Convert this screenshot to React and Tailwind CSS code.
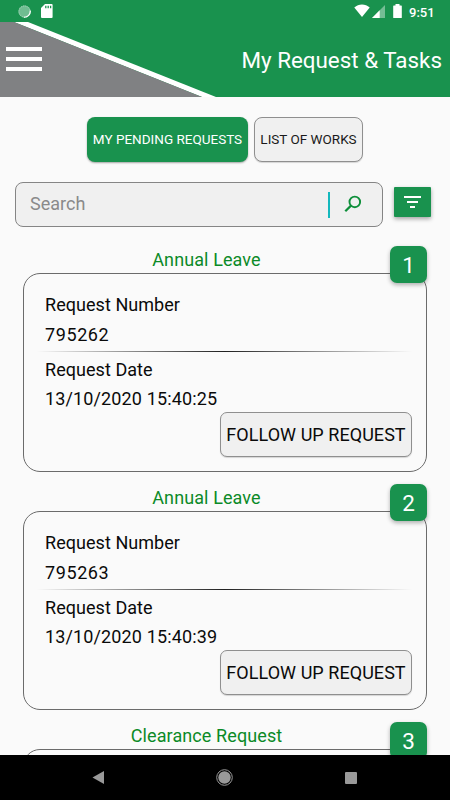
import React, { useState } from 'react'

const requests = [
  { id: 1, type: 'Annual Leave', number: '795262', date: '13/10/2020 15:40:25' },
  { id: 2, type: 'Annual Leave', number: '795263', date: '13/10/2020 15:40:39' },
  { id: 3, type: 'Clearance Request' },
]

function StatusBar() {
  return (
    <div className="h-[22px] shrink-0 bg-[#19924e] flex items-center justify-between text-white">
      <div className="flex items-center pl-[18px]">
        <svg width="13" height="13" viewBox="0 0 13 13">
          <circle cx="6.5" cy="6.5" r="6" fill="#6fbd91" />
          <circle cx="6.5" cy="6.5" r="5.6" fill="none" stroke="#b5dcc6" strokeDasharray="1 1" />
          <path d="M12.2 5.5a5.8 5.8 0 0 1-6.4 6.7" fill="none" stroke="#fff" strokeWidth="1.2" />
        </svg>
        <svg className="ml-[10px]" width="12" height="14" viewBox="0 0 12 14">
          <path d="M4 0h6.6a1 1 0 0 1 1 1v12a1 1 0 0 1-1 1H1a1 1 0 0 1-1-1V4z" fill="#fff" />
          <path d="M4.8 1.8v2.4M7.2 1.8v2.4M9.6 1.8v2.4" stroke="#19924e" strokeWidth="1.3" />
        </svg>
      </div>
      <div className="flex items-center pr-[15px]">
        <svg width="16" height="14" viewBox="0 0 17 14">
          <path d="M0.3 3.2C5-1 12-1 16.7 3.2L8.5 13.4z" fill="#fff" />
        </svg>
        <svg className="ml-[2px] mt-[1px]" width="13" height="13" viewBox="0 0 13 13">
          <path d="M13 0v13H0z" fill="#75bd95" />
          <path d="M7.7 5.3V13H0z" fill="#fff" />
        </svg>
        <svg className="ml-[8px]" width="9" height="14" viewBox="0 0 9 14">
          <path d="M2.5 0h4v1.5H8.2a.6.6 0 0 1 .6.6v11.3a.6.6 0 0 1-.6.6H.8a.6.6 0 0 1-.6-.6V2.1a.6.6 0 0 1 .6-.6h1.7z" fill="#fff" />
        </svg>
        <span className="ml-[7px] mt-[2px] w-[26px] text-[13px] leading-none font-medium whitespace-nowrap">9:51</span>
      </div>
    </div>
  )
}

function Header() {
  return (
    <header className="relative h-[75px] shrink-0 bg-[#19924e] flex items-center justify-between pl-[6px] pr-[8px]">
      <svg className="absolute inset-0" width="450" height="75" viewBox="0 0 450 75">
        <path d="M14 0h14l188 75h-14z" fill="#fff" />
        <path d="M0 0h14l188 75H0z" fill="#808183" />
      </svg>
      <button className="relative flex flex-col gap-[6px] mt-[-2px]">
        <span className="block w-9 h-1 bg-white" />
        <span className="block w-9 h-1 bg-white" />
        <span className="block w-9 h-1 bg-white" />
      </button>
      <h1 className="relative mt-[2px] text-[22.4px] leading-none text-white">My Request &amp; Tasks</h1>
    </header>
  )
}

function RequestCard({ request }) {
  return (
    <section className="relative h-[238px] shrink-0 px-[23px]">
      <h2 className="h-[27px] pt-[2px] pr-[37px] text-center text-[18px] leading-[24px] tracking-[0.1px] text-[#0b8a27]">
        {request.type}
      </h2>
      <div className="h-[199px] rounded-[17px] border border-[#6b6b6b] pl-[21px] pr-[14px] pt-[16px] flex flex-col text-[18px] leading-[30px] text-[#0a0a0a]">
        {request.number && (
          <>
            <p className="tracking-[0.05px]">Request Number</p>
            <p className="tracking-[0.6px]">{request.number}</p>
            <div className="mt-[1px] mb-[3px] -ml-[8px] h-px shrink-0 bg-linear-to-r from-transparent via-[#202020] to-transparent" />
            <p className="tracking-[0.05px]">Request Date</p>
            <p className="-mt-px tracking-[0.13px]">{request.date}</p>
            <button className="-mt-[2px] self-end w-[192px] h-[45px] shrink-0 rounded-[7px] border border-[#8f8f8f] bg-[#f0f0f0] text-[18px] leading-none tracking-[0.05px] whitespace-nowrap shadow-[0_1px_1px_rgba(0,0,0,0.15)]">
              FOLLOW UP REQUEST
            </button>
          </>
        )}
      </div>
      <span className="absolute right-[23px] top-0 w-[37px] h-[37px] rounded-[7px] bg-[#19924e] flex items-center justify-center pt-px text-[22.5px] leading-none text-white shadow-[0_2px_4px_rgba(0,0,0,0.3)]">
        {request.id}
      </span>
    </section>
  )
}

function App() {
  const [search, setSearch] = useState('')

  return (
    <div className="w-[450px] h-[800px] overflow-hidden flex flex-col bg-[#fafafa] font-[Roboto,sans-serif]">
      <StatusBar />
      <Header />

      <main className="flex-1 min-h-0 overflow-hidden flex flex-col">
        {/* Tabs */}
        <div className="mt-5 flex shrink-0 justify-center gap-[6px] text-[13.5px]">
          <button className="w-[161px] h-[45px] rounded-[8px] bg-[#19924e] text-white whitespace-nowrap shadow-[0_1px_2px_rgba(0,0,0,0.35)]">
            MY PENDING REQUESTS
          </button>
          <button className="w-[109px] h-[45px] rounded-[8px] border border-[#8f8f8f] bg-[#f0f0f0] text-[#1a1a1a] whitespace-nowrap shadow-[0_1px_1px_rgba(0,0,0,0.15)]">
            LIST OF WORKS
          </button>
        </div>

        {/* Search */}
        <div className="mt-5 flex shrink-0 items-center pl-[15px]">
          <div className="w-[368px] h-[45px] rounded-[8px] border border-[#858585] bg-[#f0f0f0] flex items-center pl-[14px] pr-[20px]">
            <input
              value={search}
              onChange={(e) => setSearch(e.target.value)}
              placeholder="Search"
              className="flex-1 min-w-0 -mt-[2px] text-[18px] outline-none placeholder:text-[#8a8a8a]"
            />
            <span className="w-[2px] h-[26px] bg-[#14b8bd]" />
            <svg className="ml-[14px] -mt-[2px]" width="18" height="18" viewBox="0 0 18 18" fill="none" stroke="#0e8f3a">
              <circle cx="10.8" cy="6.9" r="5.3" strokeWidth="1.9" />
              <path d="M7 10.6 1.3 16.2" strokeWidth="2.2" />
            </svg>
          </div>
          <button className="ml-[11px] -mt-[5px] w-[37px] h-[30px] bg-[#19924e] flex flex-col items-center justify-center gap-[3px] rounded-[1px] shadow-[0_2px_4px_rgba(0,0,0,0.35)]">
            <span className="block w-[17px] h-[2px] bg-white" />
            <span className="block w-[11px] h-[2px] bg-white" />
            <span className="block w-[5px] h-[2px] bg-white" />
          </button>
        </div>

        {/* Requests */}
        <div className="mt-[19px] flex flex-col">
          {requests.map((request) => (
            <RequestCard key={request.id} request={request} />
          ))}
        </div>
      </main>

      <nav className="h-[45px] shrink-0 bg-black flex items-center justify-between pl-[92px] pr-[93px]">
        <svg width="12" height="13" viewBox="0 0 12 13">
          <path d="M12 0v13L0.5 6.5z" fill="#999" />
        </svg>
        <svg width="17" height="17" viewBox="0 0 17 17">
          <circle cx="8.5" cy="8.5" r="7.8" fill="none" stroke="#999" strokeWidth="1" />
          <circle cx="8.5" cy="8.5" r="6.2" fill="#999" />
        </svg>
        <span className="block w-3 h-3 rounded-[1px] bg-[#999]" />
      </nav>
    </div>
  )
}

export default App
